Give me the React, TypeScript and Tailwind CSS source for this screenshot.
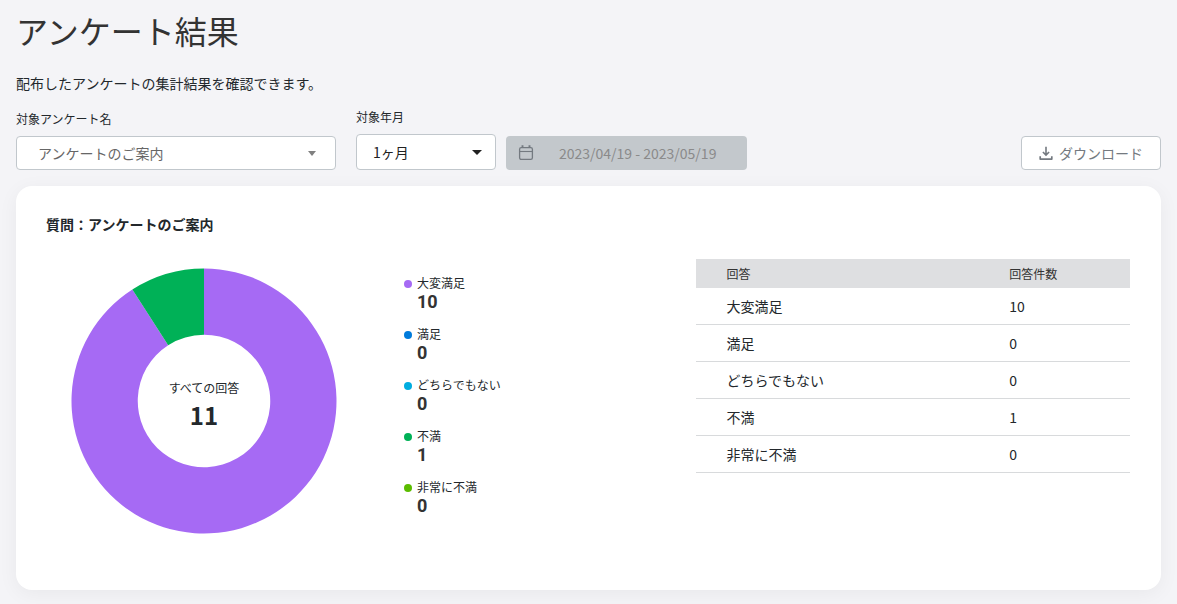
import React from "react";

type Answer = { label: string; count: number; dot: string; fill: string };

const answers: Answer[] = [
  { label: "大変満足", count: 10, dot: "bg-[#a66af4]", fill: "#a66af4" },
  { label: "満足", count: 0, dot: "bg-[#007bdb]", fill: "#007bdb" },
  { label: "どちらでもない", count: 0, dot: "bg-[#00ade0]", fill: "#00ade0" },
  { label: "不満", count: 1, dot: "bg-[#00b157]", fill: "#00b157" },
  { label: "非常に不満", count: 0, dot: "bg-[#5bbc00]", fill: "#5bbc00" },
];

const total = answers.reduce((sum, a) => sum + a.count, 0);

function point(radius: number, share: number) {
  const angle = share * Math.PI * 2;
  return `${133 + radius * Math.sin(angle)} ${133 - radius * Math.cos(angle)}`;
}

function slicePath(from: number, to: number) {
  const outer = 132.5;
  const inner = 66.25;
  const large = to - from > 0.5 ? 1 : 0;
  return `M${point(outer, from)}A${outer} ${outer} 0 ${large} 1 ${point(outer, to)}L${point(inner, to)}A${inner} ${inner} 0 ${large} 0 ${point(inner, from)}Z`;
}

function DonutChart() {
  let start = 0;
  const slices = answers
    .filter((a) => a.count > 0)
    .map((a) => {
      const from = start;
      start += a.count / total;
      return { ...a, path: slicePath(from, start) };
    });

  return (
    <div className="grid shrink-0 place-items-center">
      <svg className="col-start-1 row-start-1 size-[266px]" viewBox="0 0 266 266" aria-hidden="true">
        {slices.map((s) => (
          <path key={s.label} d={s.path} fill={s.fill} />
        ))}
      </svg>
      <div className="col-start-1 row-start-1 flex flex-col items-center pt-2">
        <span className="text-xs leading-5">すべての回答</span>
        <span className="text-2xl leading-[34px] font-bold">{total}</span>
      </div>
    </div>
  );
}

function Legend() {
  return (
    <ul className="flex shrink-0 flex-col gap-[13px] pt-[6px]">
      {answers.map((a) => (
        <li key={a.label}>
          <div className="flex items-center gap-[5px]">
            <span className={`mt-[2px] size-2 rounded-full ${a.dot}`} />
            <span className="text-xs leading-[18px]">{a.label}</span>
          </div>
          <p className="pl-[13px] font-[Roboto,sans-serif] text-lg leading-5 font-bold text-[#333]">{a.count}</p>
        </li>
      ))}
    </ul>
  );
}

function AnswerTable() {
  return (
    <table className="w-full table-fixed border-separate border-spacing-0 text-left">
      <thead>
        <tr className="h-[29px] bg-[#dedfe1] text-xs text-[#333]">
          <th className="w-[65%] pl-[30px] font-normal">回答</th>
          <th className="pl-[31px] font-normal">回答件数</th>
        </tr>
      </thead>
      <tbody className="text-sm">
        {answers.map((a) => (
          <tr key={a.label} className="h-[37px]">
            <td className="border-b border-[#d8dadc] pl-[30px]">{a.label}</td>
            <td className="border-b border-[#d8dadc] pl-[31px]">{a.count}</td>
          </tr>
        ))}
      </tbody>
    </table>
  );
}

function Caret({ className }: { className: string }) {
  return (
    <svg className={className} viewBox="0 0 10 5" preserveAspectRatio="none" aria-hidden="true">
      <path d="M0 0h10L5 5z" fill="currentColor" />
    </svg>
  );
}

export default function App() {
  return (
    <main className="min-h-screen bg-[#f4f4f7] px-4 pt-[6px] pb-[14px] font-['Noto_Sans_CJK_JP',sans-serif] text-[#23282c]">
      <h1 className="text-[32px] leading-[48px] text-[#333]">アンケート結果</h1>
      <p className="mt-[17px] text-sm leading-6">配布したアンケートの集計結果を確認できます。</p>

      <div className="mt-[13px] flex items-end">
        <div className="flex w-80 flex-col">
          <label htmlFor="survey" className="text-xs leading-[18px]">
            対象アンケート名
          </label>
          <div className="mt-2 grid items-center">
            <select
              id="survey"
              className="col-start-1 row-start-1 h-[34px] w-full appearance-none rounded border border-[#c1c7cc] bg-white pl-[21px] text-sm text-[#666]"
            >
              <option>アンケートのご案内</option>
            </select>
            <Caret className="pointer-events-none col-start-1 row-start-1 mr-5 h-[5px] w-2 justify-self-end text-[#808080]" />
          </div>
        </div>

        <div className="ml-5 flex w-[140px] flex-col">
          <label htmlFor="period" className="text-xs leading-[18px]">
            対象年月
          </label>
          <div className="mt-2 grid items-center">
            <select
              id="period"
              className="col-start-1 row-start-1 h-9 w-full appearance-none rounded border border-[#c1c7cc] bg-white pl-4 text-sm text-[#212121]"
            >
              <option>1ヶ月</option>
            </select>
            <Caret className="pointer-events-none col-start-1 row-start-1 mr-[14px] h-[5px] w-[10px] justify-self-end text-[#212121]" />
          </div>
        </div>

        <div className="ml-[10px] flex h-[34px] w-[241px] items-center rounded bg-[#c3c8cc] pl-3">
          <svg className="size-4 shrink-0 text-[#747a80]" viewBox="0 0 16 16" fill="none" stroke="currentColor" aria-hidden="true">
            <rect x="1.6" y="2.6" width="12.8" height="11.8" rx="1.6" strokeWidth="1.3" />
            <path d="M1.6 6.5h12.8" strokeWidth="1.1" />
            <path d="M4.5 0.2v2.6M11.5 0.2v2.6" strokeWidth="1.9" />
          </svg>
          <input
            type="text"
            aria-label="対象期間"
            disabled
            value="2023/04/19 - 2023/05/19"
            className="min-w-0 flex-1 pl-[25px] text-sm text-[#8a8a8a]"
          />
        </div>

        <button
          type="button"
          className="ml-auto flex h-[34px] w-[140px] items-center justify-center gap-[6px] rounded border border-[#c1c7cc] bg-white text-sm text-[#747a80]"
        >
          <svg className="size-[14px]" viewBox="0 0 14 14" fill="none" stroke="currentColor" aria-hidden="true">
            <path d="M7 0.8v8M3.9 6L7 9.1 10.1 6" strokeWidth="1.6" />
            <path d="M1.2 10.2v2.9h11.6v-2.9" strokeWidth="1.7" strokeLinejoin="round" />
          </svg>
          ダウンロード
        </button>
      </div>

      <section className="mt-4 min-h-[404px] rounded-2xl bg-white pt-[29px] pr-[31px] pb-14 pl-[30px] shadow-[0_4px_20px_rgba(0,0,0,0.05)]">
        <h2 className="text-sm leading-[18px] font-bold">質問：アンケートのご案内</h2>
        <div className="mt-[26px] flex items-start">
          <div className="flex w-3/5 items-start gap-[67px] pt-[9px] pl-[25px]">
            <DonutChart />
            <Legend />
          </div>
          <div className="w-2/5">
            <AnswerTable />
          </div>
        </div>
      </section>
    </main>
  );
}
